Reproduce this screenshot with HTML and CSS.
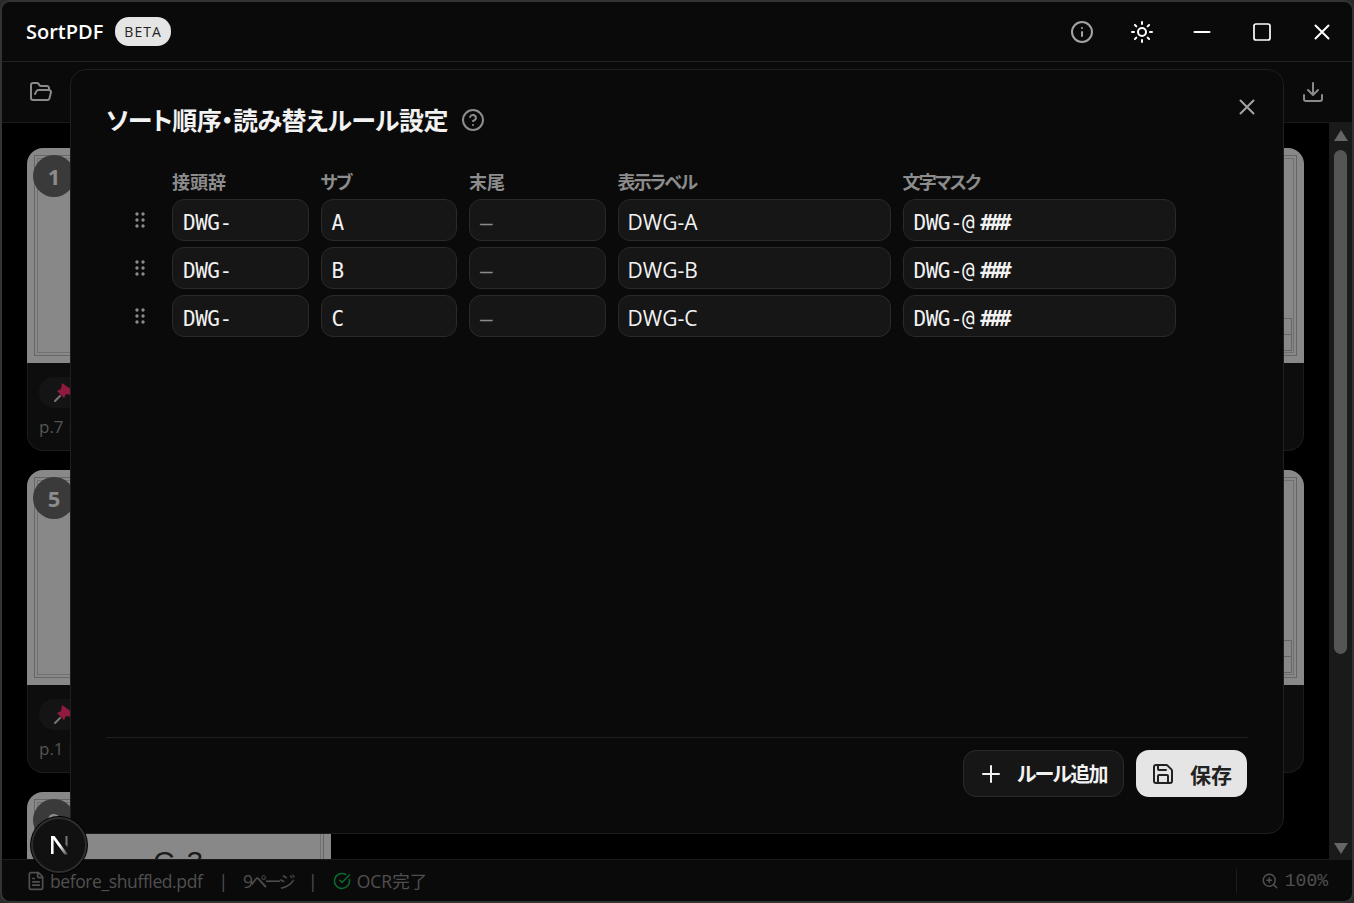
FILE: index.html
```html
<!DOCTYPE html>
<html lang="ja">
<head>
<meta charset="utf-8">
<title>SortPDF</title>
<link rel="stylesheet" href="styles.css">
</head>
<body>
<div class="window">
  <header class="titlebar">
    <div class="brand"><span class="brand-name">SortPDF</span><span class="beta">BETA</span></div>
    <div class="title-actions">
      <button class="win-btn dim"><svg class="ico24" viewBox="0 0 24 24"><circle cx="12" cy="12" r="10"/><path d="M12 16v-4M12 8h.01"/></svg></button>
      <button class="win-btn"><svg class="ico24" viewBox="0 0 24 24"><circle cx="12" cy="12" r="4"/><path d="M12 2v2M12 20v2M4.93 4.93l1.41 1.41M17.66 17.66l1.41 1.41M2 12h2M20 12h2M6.34 17.66l-1.41 1.41M19.07 4.93l-1.41 1.41"/></svg></button>
      <button class="win-btn"><svg class="ico24" viewBox="0 0 24 24"><path d="M4.500 12h15"/></svg></button>
      <button class="win-btn"><svg class="ico24 thin" viewBox="0 0 24 24"><rect x="4" y="4" width="16" height="16" rx="2"/></svg></button>
      <button class="win-btn"><svg class="ico24" viewBox="0 0 24 24"><path d="M5.500 5.500l13 13M18.500 5.500l-13 13"/></svg></button>
    </div>
  </header>
  <div class="toolbar">
    <svg class="ico24 tool" viewBox="0 0 24 24"><path d="m6 14 1.5-2.9A2 2 0 0 1 9.24 10H20a2 2 0 0 1 1.94 2.5l-1.54 6a2 2 0 0 1-1.95 1.5H4a2 2 0 0 1-2-2V5a2 2 0 0 1 2-2h3.9a2 2 0 0 1 1.69.9l.81 1.2a2 2 0 0 0 1.67.9H18a2 2 0 0 1 2 2v2"/></svg>
    <svg class="ico24 tool" viewBox="0 0 24 24"><path d="M21 15v4a2 2 0 0 1-2 2H5a2 2 0 0 1-2-2v-4M7 10l5 5 5-5M12 15V3"/></svg>
  </div>
  <main class="content">
    <div class="pages">
      <article class="card">
        <div class="thumb"><span class="num">1</span><div class="frame"><div class="frame-inner"><div class="stamp"></div></div></div></div>
        <div class="card-foot"><span class="pin-pill"><svg class="pin" viewBox="0 0 24 24"><path class="needle" d="M3 20l5-5"/><path class="head" d="M10 2l10 7v5l-6-1-2 4-7-7 4-2z"/></svg></span><span class="page-ref">p.7 |</span></div>
      </article>
      <article class="card"><div class="thumb"></div><div class="card-foot"></div></article>
      <article class="card"><div class="thumb"></div><div class="card-foot"></div></article>
      <article class="card">
        <div class="thumb"><div class="frame"><div class="frame-inner"><div class="stamp"></div></div></div></div>
        <div class="card-foot"></div>
      </article>
      <article class="card">
        <div class="thumb"><span class="num">5</span><div class="frame"><div class="frame-inner"><div class="stamp"></div></div></div></div>
        <div class="card-foot"><span class="pin-pill"><svg class="pin" viewBox="0 0 24 24"><path class="needle" d="M3 20l5-5"/><path class="head" d="M10 2l10 7v5l-6-1-2 4-7-7 4-2z"/></svg></span><span class="page-ref">p.1 |</span></div>
      </article>
      <article class="card"><div class="thumb"></div><div class="card-foot"></div></article>
      <article class="card"><div class="thumb"></div><div class="card-foot"></div></article>
      <article class="card">
        <div class="thumb"><div class="frame"><div class="frame-inner"><div class="stamp"></div></div></div></div>
        <div class="card-foot"></div>
      </article>
      <article class="card">
        <div class="thumb"><span class="num">9</span><div class="frame"><div class="frame-inner"><div class="sheet-no">C-3</div></div></div></div>
        <div class="card-foot"></div>
      </article>
    </div>
    <div class="scrollbar">
      <span class="arrow up"></span>
      <span class="scroll-thumb"></span>
      <span class="scroll-rest"></span>
      <span class="arrow down"></span>
    </div>
  </main>
  <footer class="status">
    <svg class="ico18 doc" viewBox="0 0 24 24"><path d="M15 2H6a2 2 0 0 0-2 2v16a2 2 0 0 0 2 2h12a2 2 0 0 0 2-2V7ZM14 2v4a2 2 0 0 0 2 2h4M10 9H8M16 13H8M16 17H8"/></svg>
    <span class="file">before_shuffled.pdf</span>
    <span class="sep">|</span>
    <span class="count">9ページ</span>
    <span class="sep">|</span>
    <svg class="ico18 ok" viewBox="0 0 24 24"><path d="M21.801 10A10 10 0 1 1 17 3.335M9 11l3 3L22 4"/></svg>
    <span class="ocr">OCR完了</span>
    <span class="zoom-box"><svg class="ico18" viewBox="0 0 24 24"><circle cx="11" cy="11" r="8"/><path d="M21 21l-4.350-4.350M11 8v6M8 11h6"/></svg><span class="zoom-val">100%</span></span>
  </footer>

  <section class="modal">
    <div class="modal-head">
      <h2 class="modal-title">ソート順序・読み替えルール設定</h2>
      <svg class="ico24 help" viewBox="0 0 24 24"><circle cx="12" cy="12" r="10"/><path d="M9.090 9a3 3 0 0 1 5.830 1c0 2-3 3-3 3M12 17h.01"/></svg>
      <svg class="ico24 modal-close" viewBox="0 0 24 24"><path d="M5.500 5.500l13 13M18.500 5.500l-13 13"/></svg>
    </div>
    <div class="rules">
      <span></span><span class="col-label">接頭辞</span><span class="col-label tight">サブ</span><span class="col-label">末尾</span><span class="col-label tight">表示ラベル</span><span class="col-label tight">文字マスク</span>

      <svg class="grip" viewBox="0 0 20 20"><circle cx="7" cy="4" r="1.700"/><circle cx="13" cy="4" r="1.700"/><circle cx="7" cy="10" r="1.700"/><circle cx="13" cy="10" r="1.700"/><circle cx="7" cy="16" r="1.700"/><circle cx="13" cy="16" r="1.700"/></svg>
      <div class="field mono">DWG-</div><div class="field mono">A</div><div class="field mono muted">–</div><div class="field label">DWG-A</div><div class="field mono">DWG-@<span class="hash">###</span></div>

      <svg class="grip" viewBox="0 0 20 20"><circle cx="7" cy="4" r="1.700"/><circle cx="13" cy="4" r="1.700"/><circle cx="7" cy="10" r="1.700"/><circle cx="13" cy="10" r="1.700"/><circle cx="7" cy="16" r="1.700"/><circle cx="13" cy="16" r="1.700"/></svg>
      <div class="field mono">DWG-</div><div class="field mono">B</div><div class="field mono muted">–</div><div class="field label">DWG-B</div><div class="field mono">DWG-@<span class="hash">###</span></div>

      <svg class="grip" viewBox="0 0 20 20"><circle cx="7" cy="4" r="1.700"/><circle cx="13" cy="4" r="1.700"/><circle cx="7" cy="10" r="1.700"/><circle cx="13" cy="10" r="1.700"/><circle cx="7" cy="16" r="1.700"/><circle cx="13" cy="16" r="1.700"/></svg>
      <div class="field mono">DWG-</div><div class="field mono">C</div><div class="field mono muted">–</div><div class="field label">DWG-C</div><div class="field mono">DWG-@<span class="hash">###</span></div>
    </div>
    <div class="modal-foot">
      <button class="btn btn-ghost"><svg class="ico24 small" viewBox="0 0 24 24"><path d="M12 4v16M4 12h16"/></svg>ルール追加</button>
      <button class="btn btn-solid"><svg class="ico24 small" viewBox="0 0 24 24"><path d="M15.200 3a2 2 0 0 1 1.400.6l3.800 3.800a2 2 0 0 1 .6 1.400V19a2 2 0 0 1-2 2H5a2 2 0 0 1-2-2V5a2 2 0 0 1 2-2zM17 21v-7a1 1 0 0 0-1-1H8a1 1 0 0 0-1 1v7M7 3v4a1 1 0 0 0 1 1h7"/></svg>保存</button>
    </div>
  </section>

  <div class="dev-badge">
    <svg viewBox="0 0 24 24" class="next-logo"><defs><linearGradient id="nfade" x1="0" y1="0" x2="1" y2="1"><stop offset="0.5" stop-color="#fff"/><stop offset="1" stop-color="#fff" stop-opacity="0.2"/></linearGradient></defs><path d="M4 3h2.600v18H4z" fill="#fff"/><path d="M4 3h3.500L21 21.500h-3.500z" fill="url(#nfade)"/><path d="M18.500 3h2v11l-2-2.500z" fill="#777"/></svg>
  </div>
</div>
</body>
</html>
```

FILE: styles.css
```css
* { box-sizing: border-box; }
html, body { margin: 0; height: 100%; background: #2a2a2a; overflow: hidden; }
body {
  font-family: "Open Sans", "Noto Sans CJK JP", sans-serif;
  font-feature-settings: "palt";
  color: #eee;
}
button { font: inherit; color: inherit; background: none; border: 0; padding: 0; }
svg { display: block; flex: none; }
.ico24, .ico18 {
  fill: none; stroke: currentColor; stroke-width: 2;
  stroke-linecap: round; stroke-linejoin: round;
}
.ico24 { width: 24px; height: 24px; }
.ico18 { width: 18px; height: 18px; }
.ico24.thin { stroke-width: 1.700; }

.window {
  position: relative;
  height: 903px;
  display: flex;
  flex-direction: column;
  border: 2px solid #333;
  border-radius: 10px;
  background: #0a0a0a;
  overflow: hidden;
}

.titlebar {
  flex: none;
  height: 60px;
  display: flex;
  justify-content: space-between;
  align-items: center;
  border-bottom: 1px solid #222;
  padding-left: 24px;
}
.brand { display: flex; align-items: center; gap: 12px; }
.brand-name { font-size: 20px; font-weight: 600; color: #fff; }
.beta {
  height: 29px; padding: 0 9px;
  display: flex; align-items: center;
  background: #e5e5e5; color: #222;
  border-radius: 14px;
  font-size: 14px; font-weight: 500; letter-spacing: 1px;
}
.title-actions { display: flex; }
.win-btn {
  width: 60px; height: 59px;
  display: flex; align-items: center; justify-content: center;
  color: #fff;
}
.win-btn.dim { color: #a3a3a3; }

.toolbar {
  flex: none;
  height: 61px;
  display: flex;
  justify-content: space-between;
  align-items: center;
  padding: 0 27px;
  border-bottom: 1px solid #1a1a1a;
  color: #8a8a8a;
}

.content { flex: 1; min-height: 0; display: flex; background: #000; }
.pages {
  flex: 1;
  min-width: 0;
  padding: 25px 25px 0;
  display: grid;
  grid-template-columns: repeat(4, 1fr);
  grid-auto-rows: 303px;
  gap: 19px 20px;
  overflow: hidden;
}
.card { display: flex; flex-direction: column; }
.thumb {
  position: relative;
  height: 215px;
  flex: none;
  padding: 7px;
  display: flex;
  background: #888;
  border-radius: 16px 16px 0 0;
}
.frame { flex: 1; display: flex; border: 1px solid #666; padding: 2px; }
.frame-inner {
  flex: 1;
  display: flex;
  align-items: flex-end;
  justify-content: flex-end;
  border: 1px solid #707070;
  padding: 0 1px 1px 0;
}
.stamp {
  width: 130px; height: 33px;
  background: linear-gradient(#666, #666) left 50% / 100% 1px no-repeat;
  border: 1px solid #666;
}
.sheet-no {
  align-self: flex-start;
  margin: 39px auto 0;
  font: 400 30px/40px "Liberation Sans", sans-serif;
  color: #1c1c1c;
  letter-spacing: 1px;
}
.num {
  position: absolute;
  left: 6px; top: 7px;
  width: 42px; height: 42px;
  display: flex; align-items: center; justify-content: center;
  border-radius: 50%;
  background: #3a3a3a;
  color: #8c8c8c;
  font-size: 22px; font-weight: 700;
}
.card-foot {
  flex: 1;
  padding: 14px 11px 0;
  display: flex; flex-direction: column; align-items: flex-start; gap: 7px;
  background: #0d0d0d;
  border: 1px solid #1c1c1c;
  border-top: 0;
  border-radius: 0 0 16px 16px;
}
.pin-pill {
  width: 120px; height: 31px;
  padding: 4px 0 0 13px;
  border-radius: 15px;
  background: #141414;
}
.pin { width: 24px; height: 24px; }
.needle { fill: none; stroke: #777; stroke-width: 2; stroke-linecap: round; }
.head { fill: #8f1a3d; }
.page-ref { font-size: 17px; line-height: 24px; color: #555; white-space: nowrap; word-spacing: -2px; }

.scrollbar {
  flex: none;
  width: 23px;
  display: flex;
  flex-direction: column;
  align-items: center;
  background: #1a1a1a;
  padding: 7px 0 5px;
}
.arrow { width: 0; height: 0; border-left: 7.500px solid transparent; border-right: 7.500px solid transparent; flex: none; }
.arrow.up { border-bottom: 11px solid #666; margin-bottom: 9px; }
.arrow.down { border-top: 11px solid #666; }
.scroll-thumb { flex: none; width: 13px; height: 504px; border-radius: 7px; background: #555; }
.scroll-rest { flex: 1; }

.status {
  flex: none;
  height: 42px;
  display: flex;
  align-items: center;
  padding-left: 24px;
  border-top: 1px solid #1a1a1a;
  color: #505050;
  font-size: 17.500px;
  white-space: nowrap;
}
.status .doc { width: 20px; height: 20px; }
.status .file { margin-left: 4px; letter-spacing: -0.400px; }
.status .sep { margin: 0 16px; }
.status .count { letter-spacing: -3.200px; margin-left: -1px; }
.status .ok { color: #0c6b2e; margin-right: 6px; margin-left: -1px; }
.zoom-box {
  margin-left: auto;
  height: 24px;
  display: flex; align-items: center; gap: 6px;
  padding: 0 24px;
  border-left: 1px solid #1c1c1c;
}
.zoom-val { font-family: "Liberation Mono", monospace; font-size: 18px; }

.modal {
  position: absolute;
  left: 68px; top: 67px;
  width: 1214px; height: 765px;
  display: flex;
  flex-direction: column;
  padding: 35px 35px 36px;
  background: #0a0a0a;
  border: 1px solid #1f1f1f;
  border-radius: 16px;
}
.modal-head { position: relative; display: flex; align-items: center; gap: 13px; height: 30px; flex: none; }
.modal-title { margin: -3px 0 0; font-size: 25px; font-weight: 700; letter-spacing: -0.550px; color: #f2f2f2; white-space: nowrap; }
.help { color: #8c8c8c; }
.modal-close { position: absolute; right: -11px; top: -10px; color: #a3a3a3; }
.rules {
  flex: 1;
  margin-top: 34px;
  display: grid;
  grid-template-columns: 54px repeat(3, 136.500px) repeat(2, 273px);
  grid-template-rows: 24px;
  grid-auto-rows: 42px;
  gap: 6px 12px;
  align-content: start;
}
.col-label { font-size: 18px; font-weight: 700; line-height: 26px; color: #8c8c8c; white-space: nowrap; }
.col-label.tight { letter-spacing: -1.800px; }
.grip { width: 20px; height: 20px; fill: #8a8a8a; justify-self: end; align-self: center; margin-right: 10px; }
.field {
  display: flex;
  align-items: center;
  padding: 4px 10px 0;
  background: #161616;
  border: 1px solid #2a2a2a;
  border-radius: 12px;
  color: #f2f2f2;
  white-space: nowrap;
}
.mono { font-family: "DejaVu Sans Mono", monospace; font-size: 21px; letter-spacing: -0.500px; font-weight: 400; padding-top: 6px; }
.muted { color: #8a8a8a; }
.label { font-size: 21px; padding-left: 9px; }
.hash { margin-left: 6px; font-weight: 700; letter-spacing: -3.200px; }
.modal-foot {
  flex: none;
  display: flex;
  justify-content: flex-end;
  gap: 12px;
  height: 60px;
  padding: 12px 1px 0 0;
  border-top: 1px solid #1f1f1f;
}
.btn {
  height: 47px;
  display: flex; align-items: center;
  border-radius: 13px;
  font-size: 20px; font-weight: 700;
  white-space: nowrap;
}
.small { width: 24px; height: 24px; }
.btn-ghost { width: 161px; padding-left: 15px; gap: 14px; letter-spacing: -1.700px; background: #161616; border: 1px solid #2a2a2a; color: #f2f2f2; }
.btn-solid { width: 111px; padding-left: 15px; gap: 15px; font-size: 21px; font-weight: 600; background: #e5e5e5; color: #222; }

.dev-badge {
  position: absolute;
  left: 29px; top: 815px;
  width: 56px; height: 56px;
  display: flex; align-items: center; justify-content: center;
  border-radius: 50%;
  background: #111;
  border: 2px solid #2e2e2e;
  box-shadow: 0 0 0 1px #000;
}
.next-logo { width: 24px; height: 24px; }
```
